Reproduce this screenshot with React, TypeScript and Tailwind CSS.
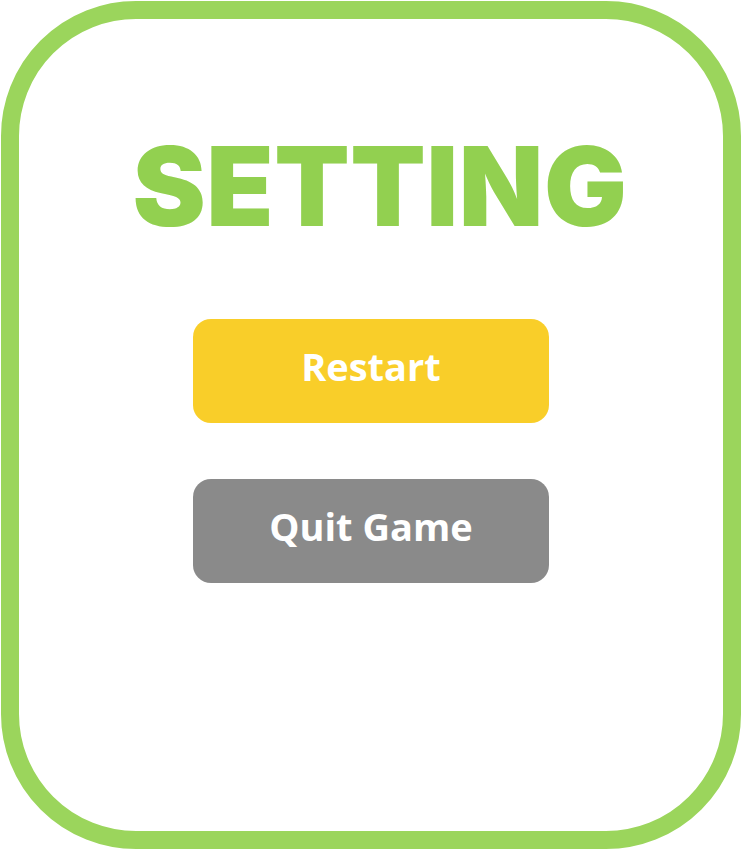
export default function App() {
  return (
    <div className="w-[742px] h-[850px] bg-white p-px">
      <div className="h-full border-[18px] border-[#9bd55c] rounded-[135px] flex flex-col items-center pt-[112px]">
        <h1
          className="ml-[18px] text-[110px] leading-none font-black text-[#92d050] tracking-[0.5px]"
          style={{ fontFamily: 'Inter, "Liberation Sans", sans-serif' }}
        >
          SETTING
        </h1>
        <div
          className="mt-[78px] flex flex-col gap-[56px]"
          style={{ fontFamily: '"Open Sans", sans-serif' }}
        >
          <button className="w-[356px] h-[104px] rounded-[18px] bg-[#f9ce29] text-white text-[38px] font-bold pb-[10px]">
            Restart
          </button>
          <button className="w-[356px] h-[104px] rounded-[18px] bg-[#8a8a8a] text-white text-[38px] font-bold pb-[10px]">
            Quit Game
          </button>
        </div>
      </div>
    </div>
  );
}
